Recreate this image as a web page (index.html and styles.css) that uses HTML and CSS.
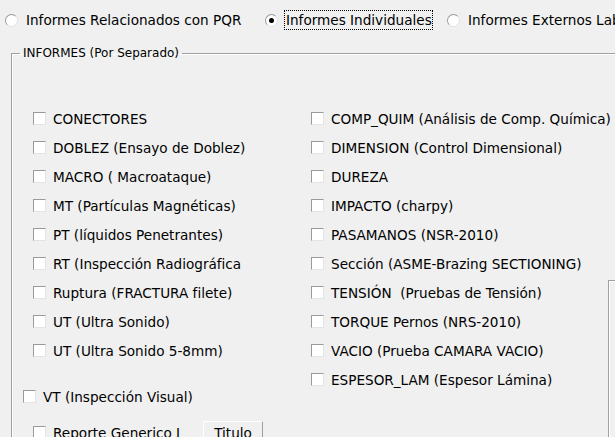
FILE: index.html
```html
<!DOCTYPE html>
<html lang="es">

<head>
    <meta charset="UTF-8">
    <title>Informes</title>
    <link rel="stylesheet" href="styles.css">
</head>

<body>
    <div class="modes">
        <label class="radio"><span class="dot"></span><span>Informes Relacionados con PQR</span></label>
        <label class="radio checked"><span class="dot"></span><span class="focus">Informes Individuales</span></label>
        <label class="radio"><span class="dot"></span><span>Informes Externos Laboratorio</span></label>
    </div>

    <fieldset class="group">
        <legend>INFORMES (Por Separado)</legend>
        <div class="cols">
            <div class="col">
                <label class="check"><span class="box"></span>CONECTORES</label>
                <label class="check"><span class="box"></span>DOBLEZ (Ensayo de Doblez)</label>
                <label class="check"><span class="box"></span>MACRO ( Macroataque)</label>
                <label class="check"><span class="box"></span>MT (Partículas Magnéticas)</label>
                <label class="check"><span class="box"></span>PT (líquidos Penetrantes)</label>
                <label class="check"><span class="box"></span>RT (Inspección Radiográfica</label>
                <label class="check"><span class="box"></span>Ruptura (FRACTURA filete)</label>
                <label class="check"><span class="box"></span>UT (Ultra Sonido)</label>
                <label class="check"><span class="box"></span>UT (Ultra Sonido 5-8mm)</label>
                <label class="check vt"><span class="box"></span>VT (Inspección Visual)</label>
                <div class="generic">
                    <label class="check"><span class="box"></span>Reporte Generico I</label>
                    <button class="btn" type="button">Titulo</button>
                </div>
            </div>
            <div class="col">
                <label class="check"><span class="box"></span>COMP_QUIM (Análisis de Comp. Química)</label>
                <label class="check"><span class="box"></span>DIMENSION (Control Dimensional)</label>
                <label class="check"><span class="box"></span>DUREZA</label>
                <label class="check"><span class="box"></span>IMPACTO (charpy)</label>
                <label class="check"><span class="box"></span>PASAMANOS (NSR-2010)</label>
                <label class="check"><span class="box"></span>Sección (ASME-Brazing SECTIONING)</label>
                <label class="check"><span class="box"></span>TENSIÓN&nbsp; (Pruebas de Tensión)</label>
                <label class="check"><span class="box"></span>TORQUE Pernos (NRS-2010)</label>
                <label class="check"><span class="box"></span>VACIO (Prueba CAMARA VACIO)</label>
                <label class="check"><span class="box"></span>ESPESOR_LAM (Espesor Lámina)</label>
            </div>
            <div class="col">
                <div class="panel"></div>
            </div>
        </div>
    </fieldset>
</body>

</html>
```

FILE: styles.css
```css
/* styles.css */

body {
    margin: 0;
    width: 615px;
    height: 437px;
    overflow: hidden;
    background-color: #f0f0f0;
    font-family: "DejaVu Sans", Verdana, sans-serif;
    font-size: 13.6px;
    color: #000;
}

.modes {
    display: grid;
    grid-template-columns: 260px 182px 300px;
    padding: 9px 0 0 5px;
    height: 37px;
    white-space: nowrap;
}

.radio {
    display: flex;
    align-items: center;
    height: 22px;
}

.dot {
    position: relative;
    width: 11px;
    height: 11px;
    margin-right: 8px;
    border: 1px solid #a9a9a9;
    border-color: #9a9a9a #e2e2e2 #e2e2e2 #9a9a9a;
    border-radius: 50%;
    background-color: #fff;
    flex: none;
}

.checked .dot::after {
    content: "";
    position: absolute;
    left: 3px;
    top: 3px;
    width: 5px;
    height: 5px;
    border-radius: 50%;
    background-color: #000;
}

.focus {
    margin-left: -2px;
    padding: 1px 0 1px 1px;
    border: 1px dotted #000;
}

.group {
    margin: 0 0 0 11px;
    padding: 0;
    width: 700px;
    min-height: 500px;
    border: 1px solid #a0a0a0;
    box-shadow: inset 1px 1px #fff;
}

.group legend {
    margin-left: 8px;
    padding: 0 3px;
    font-size: 12px;
    line-height: 14px;
}

.cols {
    display: grid;
    grid-template-columns: 278px 295px 1fr;
    padding: 44px 0 0 21px;
}

.col {
    display: flex;
    flex-direction: column;
}

.check {
    display: flex;
    align-items: center;
    height: 29px;
    white-space: nowrap;
}

.box {
    width: 11px;
    height: 11px;
    margin-right: 7px;
    border: 1px solid;
    border-color: #9a9a9a #e4e4e4 #e4e4e4 #9a9a9a;
    background-color: #fff;
    flex: none;
}

.vt {
    margin: 17px 0 0 -10px;
}

.generic {
    display: flex;
    align-items: center;
    margin-top: 7px;
}

.generic .check {
    width: 170px;
}

.btn {
    width: 60px;
    height: 24px;
    padding: 0;
    font: inherit;
    color: #000;
    background-color: #f0f0f0;
    border: 1px solid;
    border-color: #fff #a0a0a0 #a0a0a0 #fff;
}

.panel {
    margin: 176px 0 0 2px;
    height: 300px;
    border: 1px solid #a0a0a0;
    box-shadow: inset 1px 1px #fff;
}
```
